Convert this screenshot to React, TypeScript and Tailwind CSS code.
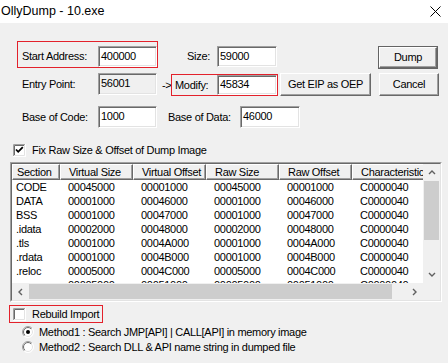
import React from 'react';

const rows = [
    ['CODE', '00045000', '00001000', '00045000', '00001000', 'C0000040'],
    ['DATA', '00001000', '00046000', '00001000', '00046000', 'C0000040'],
    ['BSS', '00001000', '00047000', '00001000', '00047000', 'C0000040'],
    ['.idata', '00002000', '00048000', '00002000', '00048000', 'C0000040'],
    ['.tls', '00001000', '0004A000', '00001000', '0004A000', 'C0000040'],
    ['.rdata', '00001000', '0004B000', '00001000', '0004B000', 'C0000040'],
    ['.reloc', '00005000', '0004C000', '00005000', '0004C000', 'C0000040'],
    ['.rsrc', '00005000', '00051000', '00005000', '00051000', 'C0000040'],
];

const columns = ['Section', 'Virtual Size', 'Virtual Offset', 'Raw Size', 'Raw Offset', 'Characteristic'];
const colWidths = ['w-[48px] pl-[4px]', 'w-[73px] pl-[8px]', 'w-[73px] pl-[8px]', 'w-[73px] pl-[8px]', 'w-[73px] pl-[8px]', 'w-[73px] pl-[8px]'];

function Field({ value, className, grey }: { value: string; className: string; grey?: boolean }) {
    return (
        <div
            className={`${className} flex items-center pl-[1px] border border-t-[#a0a0a0] border-l-[#a0a0a0] border-b-white border-r-white shadow-[inset_1px_1px_0_#696969,inset_-1px_-1px_0_#e3e3e3] ${grey ? 'bg-[#f0f0f0]' : 'bg-white'}`}
        >
            <span className="pl-[1px] pb-[1px]">{value}</span>
        </div>
    );
}

function Btn({ label, className, isDefault }: { label: string; className: string; isDefault?: boolean }) {
    const inner = (
        <div className="w-full h-full flex items-center justify-center border border-t-white border-l-white border-b-[#696969] border-r-[#696969] shadow-[inset_-1px_-1px_0_#a0a0a0] bg-[#f0f0f0]">
            {label}
        </div>
    );
    if (isDefault) {
        return <div className={`${className} border border-[#646464]`}>{inner}</div>;
    }
    return <div className={className}>{inner}</div>;
}

function CheckBox({ checked }: { checked?: boolean }) {
    return (
        <svg width="13" height="13" viewBox="0 0 13 13" className="shrink-0">
            <rect x="0" y="0" width="13" height="13" fill="#ffffff" />
            <path d="M0.5 12 V0.5 H12" stroke="#a0a0a0" fill="none" />
            <path d="M1.5 11 V1.5 H11" stroke="#696969" fill="none" />
            <path d="M0 12.5 H12.5 V0" stroke="#ffffff" fill="none" />
            <path d="M1 11.5 H11.5 V1" stroke="#e3e3e3" fill="none" />
            {checked && <path d="M3 5.5 L5.2 7.8 L9.8 3.2" stroke="#000" strokeWidth="1.8" fill="none" />}
        </svg>
    );
}

function Radio({ id, checked }: { id: string; checked?: boolean }) {
    return (
        <svg width="12" height="12" viewBox="0 0 12 12" className="shrink-0">
            <defs>
                <linearGradient id={`${id}o`} x1="0" y1="0" x2="1" y2="1">
                    <stop offset="0.5" stopColor="#a0a0a0" />
                    <stop offset="0.5" stopColor="#ffffff" />
                </linearGradient>
                <linearGradient id={`${id}i`} x1="0" y1="0" x2="1" y2="1">
                    <stop offset="0.5" stopColor="#696969" />
                    <stop offset="0.5" stopColor="#e3e3e3" />
                </linearGradient>
            </defs>
            <circle cx="6" cy="6" r="5.5" fill="#fff" stroke={`url(#${id}o)`} />
            <circle cx="6" cy="6" r="4.5" fill="#fff" stroke={`url(#${id}i)`} />
            {checked && <circle cx="6" cy="6" r="2" fill="#000" />}
        </svg>
    );
}

function Chevron({ dir }: { dir: 'up' | 'down' | 'left' | 'right' }) {
    const d = {
        up: 'M1 5 L4 2 L7 5',
        down: 'M1 2 L4 5 L7 2',
        left: 'M5 1 L2 4 L5 7',
        right: 'M2 1 L5 4 L2 7',
    }[dir];
    return (
        <svg width="8" height="8" viewBox="0 0 8 8">
            <path d={d} stroke="#606060" strokeWidth="1.4" fill="none" />
        </svg>
    );
}

export default function App() {
    return (
        <div className="w-[448px] h-[363px] overflow-hidden bg-[#f0f0f0] text-black font-['Liberation_Sans',Arial,sans-serif] text-[11px] leading-[13px] tracking-[-0.3px]">
            {/* Title bar */}
            <div className="h-[23px] bg-white flex items-center justify-between pl-[1px] pr-[7px] tracking-normal">
                <span className="text-[12.5px] pb-[1px]">OllyDump - 10.exe</span>
                <svg width="11" height="11" viewBox="0 0 11 11">
                    <path d="M0.5 0.5 L10.5 10.5 M10.5 0.5 L0.5 10.5" stroke="#000" strokeWidth="1" />
                </svg>
            </div>

            {/* Row 1 */}
            <div className="mt-[18px] pl-[17px] flex items-start h-[28px]">
                <div className="w-[141px] h-[27px] border border-[#e3212b] flex items-center pl-[4px] pt-[4px]">
                    <span className="flex-1">Start Address:</span>
                    <Field value="400000" className="w-[59px] h-[21px]" />
                </div>
                <div className="ml-[29px] mt-[5px] flex items-center">
                    <span className="w-[30px]">Size:</span>
                    <Field value="59000" className="w-[60px] h-[21px]" />
                </div>
                <Btn label="Dump" isDefault className="ml-[101px] mt-[5px] w-[60px] h-[23px]" />
            </div>

            {/* Row 2 */}
            <div className="mt-[4px] pl-[22px] flex items-start h-[23px]">
                <span className="w-[76px] h-[22px] flex items-center">Entry Point:</span>
                <Field value="56001" grey className="w-[59px] h-[22px] !items-start pt-[3px]" />
                <span className="ml-[5px] w-[9px] h-[22px] flex items-center pt-[2px] whitespace-nowrap">-&gt;</span>
                <div className="mt-[1px] w-[107px] h-[22px] border border-[#e3212b] flex items-center pl-[3px]">
                    <span className="flex-1">Modify:</span>
                    <Field value="45834" className="w-[60px] h-[20px]" />
                </div>
                <Btn label="Get EIP as OEP" className="ml-[2px] w-[91px] h-[23px]" />
                <Btn label="Cancel" className="ml-[8px] w-[60px] h-[23px]" />
            </div>

            {/* Row 3 */}
            <div className="mt-[10px] pl-[22px] flex items-center h-[22px]">
                <span className="w-[76px]">Base of Code:</span>
                <Field value="1000" className="w-[59px] h-[22px]" />
                <span className="ml-[11px] w-[72px]">Base of Data:</span>
                <Field value="46000" className="w-[60px] h-[22px]" />
            </div>

            {/* Fix raw size */}
            <div className="mt-[16px] pl-[13px] flex items-center h-[13px]">
                <CheckBox checked />
                <span className="ml-[6px]">Fix Raw Size &amp; Offset of Dump Image</span>
            </div>

            {/* Section list */}
            <div className="mt-[5px] ml-[10px] w-[432px] h-[140px] border border-t-[#a0a0a0] border-l-[#a0a0a0] border-b-white border-r-white">
                <div className="w-full h-full flex flex-col border border-t-[#696969] border-l-[#696969] border-b-[#e3e3e3] border-r-[#e3e3e3] bg-white">
                    <div className="flex h-[119px]">
                        <div className="w-[411px] overflow-hidden">
                            <div className="flex h-[16px] w-[433px]">
                                {columns.map((c, i) => (
                                    <div
                                        key={c}
                                        className={`${colWidths[i]} shrink-0 flex items-center whitespace-nowrap overflow-hidden bg-[#f0f0f0] border border-t-white border-l-white border-b-[#696969] border-r-[#696969] shadow-[inset_-1px_-1px_0_#a0a0a0]`}
                                    >
                                        {c}
                                    </div>
                                ))}
                            </div>
                            {rows.map((r) => (
                                <div key={r[0]} className="flex h-[14px] items-center w-[433px]">
                                    {r.map((v, i) => (
                                        <div key={i} className={`${colWidths[i]} shrink-0 whitespace-nowrap`}>
                                            {v}
                                        </div>
                                    ))}
                                </div>
                            ))}
                        </div>
                        {/* vertical scrollbar */}
                        <div className="w-[17px] bg-[#f0f0f0] flex flex-col">
                            <div className="h-[17px] flex items-center justify-center">
                                <Chevron dir="up" />
                            </div>
                            <div className="flex-1 flex flex-col">
                                <div className="h-[59px] mx-[1px] bg-[#cdcdcd]" />
                            </div>
                            <div className="h-[17px] flex items-center justify-center">
                                <Chevron dir="down" />
                            </div>
                        </div>
                    </div>
                    {/* horizontal scrollbar */}
                    <div className="flex h-[17px] bg-[#f0f0f0]">
                        <div className="w-[411px] flex">
                            <div className="w-[17px] flex items-center justify-center">
                                <Chevron dir="left" />
                            </div>
                            <div className="flex-1 flex items-center">
                                <div className="h-[15px] w-[363px] bg-[#cdcdcd]" />
                            </div>
                            <div className="w-[17px] flex items-center justify-center">
                                <Chevron dir="right" />
                            </div>
                        </div>
                        <div className="w-[17px]" />
                    </div>
                </div>
            </div>

            {/* Rebuild import */}
            <div className="mt-[3px] ml-[9px] w-[94px] h-[18px] border border-[#e3212b] flex items-center pl-[3px]">
                <CheckBox />
                <span className="ml-[6px]">Rebuild Import</span>
            </div>

            <div className="mt-[3px] pl-[22px] flex items-center h-[12px]">
                <Radio id="r1" checked />
                <span className="ml-[5px]">Method1 : Search JMP[API] | CALL[API] in memory image</span>
            </div>
            <div className="mt-[3px] pl-[22px] flex items-center h-[12px]">
                <Radio id="r2" />
                <span className="ml-[5px]">Method2 : Search DLL &amp; API name string in dumped file</span>
            </div>
        </div>
    );
}
